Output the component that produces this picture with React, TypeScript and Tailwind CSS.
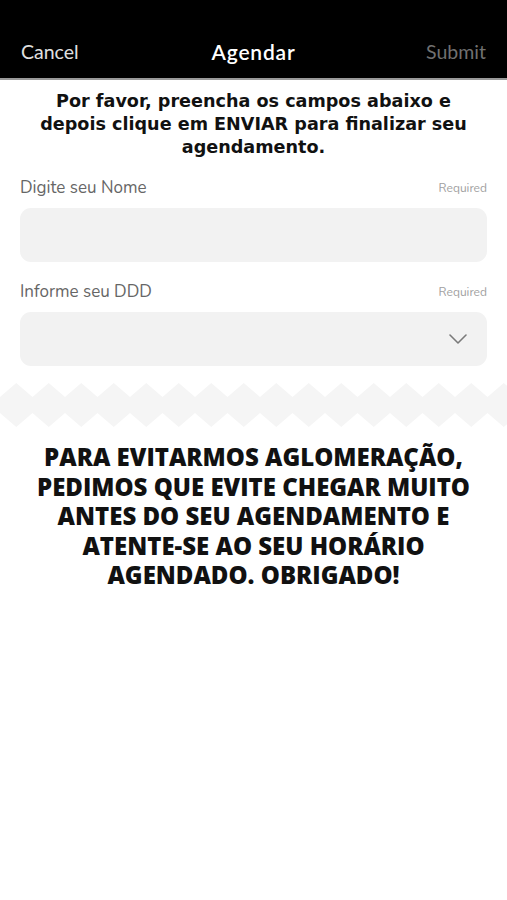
import React from "react";

function Zigzag() {
  const period = 32.5;
  const n = Math.ceil(507 / period) + 1;
  const pts: string[] = [];
  for (let i = 0; i < n; i++) {
    const x = i * period;
    pts.push(`${x},14 ${x + period / 2},0`);
  }
  pts.push(`${n * period},14`);
  const bottom: string[] = [];
  for (let i = n; i > 0; i--) {
    const x = i * period;
    bottom.push(`${x},30 ${x - period / 2},44`);
  }
  bottom.push(`0,30`);
  return (
    <svg width="507" height="44" viewBox="0 0 507 44" className="block">
      <polygon points={[...pts, ...bottom].join(" ")} fill="#f5f5f5" />
    </svg>
  );
}

export default function App() {
  return (
    <div className="w-[507px] h-[900px] bg-white flex flex-col">
      <div className="h-[80px] bg-black border-b-2 border-[#9a9a9a] flex items-end pb-[11px] px-[21px]">
        <div className="flex-1 flex justify-between items-center font-['Lato',sans-serif]">
          <span className="text-[19.5px] text-[#e0e0e0] w-[80px]">Cancel</span>
          <span className="text-[21px] text-white font-semibold tracking-[0.8px]">Agendar</span>
          <span className="text-[19.5px] text-[#707070] w-[80px] text-right">Submit</span>
        </div>
      </div>
      <p className="mt-[10px] px-[30px] text-center text-[17.6px] leading-[23px] font-bold text-[#111] font-['DejaVu_Sans',sans-serif]">
        Por favor, preencha os campos abaixo e depois clique em ENVIAR para finalizar seu agendamento.
      </p>
      <div className="px-[20px] mt-[18px] font-['Nunito','Lato',sans-serif]">
        <div className="flex justify-between items-center h-[22px]">
          <span className="text-[17px] text-[#666]">Digite seu Nome</span>
          <span className="text-[12px] text-[#a0a0a0]">Required</span>
        </div>
        <div className="mt-[9px] h-[54px] rounded-[11px] bg-[#f2f2f2]" />
        <div className="mt-[19px] flex justify-between items-center h-[22px]">
          <span className="text-[17px] text-[#666]">Informe seu DDD</span>
          <span className="text-[12px] text-[#a0a0a0]">Required</span>
        </div>
        <div className="mt-[9px] h-[54px] rounded-[11px] bg-[#f2f2f2] flex items-center justify-end pr-[20px]">
          <svg width="18" height="10" viewBox="0 0 18 10">
            <polyline points="1,1 9,9 17,1" fill="none" stroke="#7a7a7a" strokeWidth="1.6" strokeLinecap="round" strokeLinejoin="round" />
          </svg>
        </div>
      </div>
      <div className="mt-[17px]">
        <Zigzag />
      </div>
      <p className="mt-[15px] px-[30px] text-center text-[24px] leading-[29.5px] font-extrabold text-[#111] font-['Open_Sans',sans-serif]">
        PARA EVITARMOS AGLOMERAÇÃO, PEDIMOS QUE EVITE CHEGAR MUITO ANTES DO SEU AGENDAMENTO E ATENTE-SE AO SEU HORÁRIO AGENDADO. OBRIGADO!
      </p>
    </div>
  );
}
